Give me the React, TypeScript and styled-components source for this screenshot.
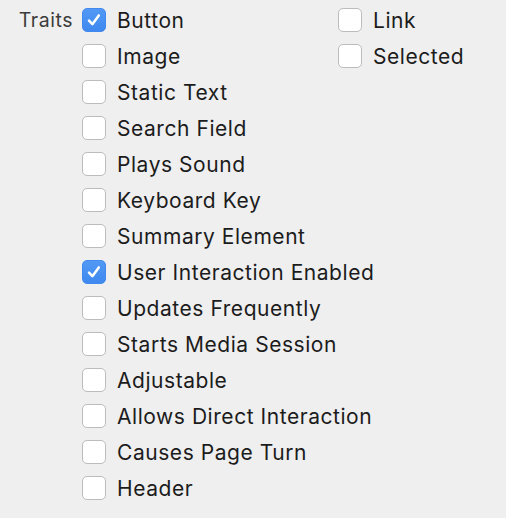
import React from "react";
import styled, { createGlobalStyle } from "styled-components";

const GlobalStyle = createGlobalStyle`
  html, body {
    margin: 0;
    padding: 0;
    background: #efefef;
  }
  body {
    font-family: Inter, "Liberation Sans", Arial, sans-serif;
  }
`;

const Panel = styled.div`
  display: flex;
  flex-direction: row;
  padding-top: 2px;
  width: 506px;
  height: 518px;
  box-sizing: border-box;
`;

const Label = styled.div`
  width: 73px;
  height: 36px;
  line-height: 36px;
  text-align: right;
  padding-right: 9px;
  font-size: 19.5px;
  letter-spacing: 0.55px;
  color: #3c3c3c;
`;

const Column = styled.div<{ $width?: number }>`
  display: flex;
  flex-direction: column;
  width: ${(p) => (p.$width ? `${p.$width}px` : "auto")};
`;

const Row = styled.label`
  display: flex;
  align-items: center;
  gap: 11px;
  height: 36px;
  font-size: 21px;
  letter-spacing: 0.55px;
  color: #1c1c1c;
  white-space: nowrap;
`;

const Box = styled.span<{ $checked?: boolean }>`
  display: flex;
  align-items: center;
  justify-content: center;
  width: 24px;
  height: 24px;
  box-sizing: border-box;
  border-radius: 5px;
  flex-shrink: 0;
  background: ${(p) =>
    p.$checked ? "linear-gradient(#5299f5, #3f88ef)" : "#ffffff"};
  border: 1px solid ${(p) => (p.$checked ? "#4189ef" : "#bcbcbc")};
`;

const Check = () => (
  <svg width="16" height="16" viewBox="0 0 16 16">
    <path
      d="M3 8.6 L6.4 12.2 L12.8 3.4"
      fill="none"
      stroke="#fff"
      strokeWidth="2.5"
      strokeLinecap="round"
      strokeLinejoin="round"
    />
  </svg>
);

type Trait = { name: string; checked?: boolean };

const left: Trait[] = [
  { name: "Button", checked: true },
  { name: "Image" },
  { name: "Static Text" },
  { name: "Search Field" },
  { name: "Plays Sound" },
  { name: "Keyboard Key" },
  { name: "Summary Element" },
  { name: "User Interaction Enabled", checked: true },
  { name: "Updates Frequently" },
  { name: "Starts Media Session" },
  { name: "Adjustable" },
  { name: "Allows Direct Interaction" },
  { name: "Causes Page Turn" },
  { name: "Header" },
];

const right: Trait[] = [{ name: "Link" }, { name: "Selected" }];

const TraitRow = ({ trait }: { trait: Trait }) => (
  <Row>
    <Box $checked={trait.checked}>{trait.checked && <Check />}</Box>
    <span>{trait.name}</span>
  </Row>
);

export default function App() {
  return (
    <>
      <GlobalStyle />
      <Panel>
        <Label>Traits</Label>
        <Column $width={256}>
          {left.map((t) => (
            <TraitRow key={t.name} trait={t} />
          ))}
        </Column>
        <Column>
          {right.map((t) => (
            <TraitRow key={t.name} trait={t} />
          ))}
        </Column>
      </Panel>
    </>
  );
}
